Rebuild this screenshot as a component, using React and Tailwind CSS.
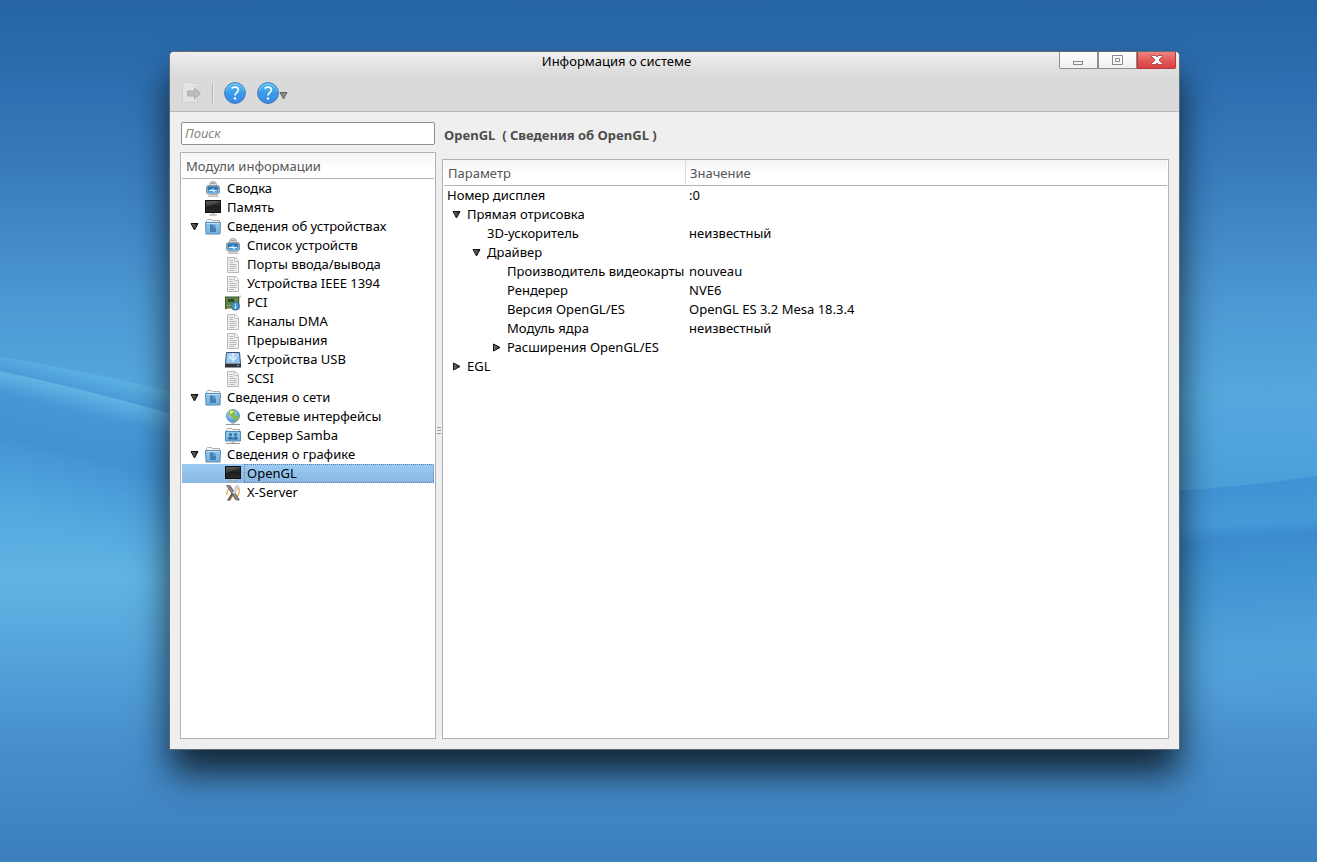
import React, { useState } from 'react';

const modules = [
  { label: 'Сводка', icon: 'computer', depth: 0 },
  { label: 'Память', icon: 'monitor', depth: 0 },
  { label: 'Сведения об устройствах', icon: 'folder', depth: 0, open: true },
  { label: 'Список устройств', icon: 'computer', depth: 1 },
  { label: 'Порты ввода/вывода', icon: 'document', depth: 1 },
  { label: 'Устройства IEEE 1394', icon: 'document', depth: 1 },
  { label: 'PCI', icon: 'pci', depth: 1 },
  { label: 'Каналы DMA', icon: 'document', depth: 1 },
  { label: 'Прерывания', icon: 'document', depth: 1 },
  { label: 'Устройства USB', icon: 'usb', depth: 1 },
  { label: 'SCSI', icon: 'document', depth: 1 },
  { label: 'Сведения о сети', icon: 'folder', depth: 0, open: true },
  { label: 'Сетевые интерфейсы', icon: 'globe', depth: 1 },
  { label: 'Сервер Samba', icon: 'samba', depth: 1 },
  { label: 'Сведения о графике', icon: 'folder', depth: 0, open: true },
  { label: 'OpenGL', icon: 'monitor', depth: 1 },
  { label: 'X-Server', icon: 'xserver', depth: 1 },
];

const params = [
  { name: 'Номер дисплея', value: ':0', pad: 'pl-[3px]' },
  { name: 'Прямая отрисовка', value: '', pad: 'pl-2', arrow: 'down' },
  { name: '3D-ускоритель', value: 'неизвестный', pad: 'pl-[43px]' },
  { name: 'Драйвер', value: '', pad: 'pl-7', arrow: 'down' },
  { name: 'Производитель видеокарты', value: 'nouveau', pad: 'pl-[63px]' },
  { name: 'Рендерер', value: 'NVE6', pad: 'pl-[63px]' },
  { name: 'Версия OpenGL/ES', value: 'OpenGL ES 3.2 Mesa 18.3.4', pad: 'pl-[63px]' },
  { name: 'Модуль ядра', value: 'неизвестный', pad: 'pl-[63px]' },
  { name: 'Расширения OpenGL/ES', value: '', pad: 'pl-12', arrow: 'right' },
  { name: 'EGL', value: '', pad: 'pl-2', arrow: 'right' },
];

const Gradients = () => (
  <svg className="absolute size-0" aria-hidden="true">
    <defs>
      <linearGradient id="help" x1="0" y1="0" x2="0" y2="1">
        <stop offset="0" stopColor="#5cc0f2" />
        <stop offset="0.5" stopColor="#3a9ce9" />
        <stop offset="1" stopColor="#3b86e6" />
      </linearGradient>
      <linearGradient id="screen" x1="0" y1="0" x2="0" y2="1">
        <stop offset="0" stopColor="#444" />
        <stop offset="0.5" stopColor="#1c1c1c" />
        <stop offset="1" stopColor="#2a2a2a" />
      </linearGradient>
      <linearGradient id="folder" x1="0" y1="0" x2="0" y2="1">
        <stop offset="0" stopColor="#93c6eb" />
        <stop offset="1" stopColor="#74b0de" />
      </linearGradient>
      <linearGradient id="blue" x1="0" y1="0" x2="0" y2="1">
        <stop offset="0" stopColor="#1a64a8" />
        <stop offset="1" stopColor="#4fb0f2" />
      </linearGradient>
      <radialGradient id="ocean" cx="0.4" cy="0.3" r="0.7">
        <stop offset="0" stopColor="#c4e4f8" />
        <stop offset="1" stopColor="#3f8fd0" />
      </radialGradient>
      <linearGradient id="arrow" x1="0" y1="0" x2="1" y2="0">
        <stop offset="0" stopColor="#777" />
        <stop offset="1" stopColor="#222" />
      </linearGradient>
    </defs>
  </svg>
);

const icons = {
  computer: (
    <>
      <path d="M4.5 4.5V3.5q0-3 3.5-3t3.5 3v1z" fill="#dedede" stroke="#a2a2a2" />
      <path d="M6 2.5h4" stroke="#8e8e8e" strokeWidth="0.8" />
      <path d="M5 13h6l2 2.5H3z" fill="#d8d8d8" stroke="#a8a8a8" strokeWidth="0.6" />
      <rect x="1.5" y="4.5" width="13" height="8.5" rx="2" fill="#b9c3cb" stroke="#8d969d" />
      <rect x="2.5" y="5.5" width="11" height="6.5" rx="1" fill="url(#blue)" />
      <path d="M4 9.5h8M6 9.5L7.5 8H9M7.5 9.5L9 11h1" stroke="#f0f9ff" fill="none" strokeWidth="0.9" />
    </>
  ),
  monitor: (
    <>
      <rect x="0.5" y="0.5" width="15" height="12" fill="url(#screen)" stroke="#111" />
      <path d="M1 1h14L1 7.5z" fill="#fff" opacity="0.12" />
      <path d="M6.5 13h3l0.5 1.500H6z" fill="#ccc" />
      <path d="M4 14.5h8v1H4z" fill="#9a9a9a" />
    </>
  ),
  folder: (
    <>
      <path d="M1.5 4V1.5l1-1h4l1 1h7V4" fill="#f3f3f3" stroke="#adadad" />
      <path d="M0.5 3.5h15L15 15H1z" fill="url(#folder)" stroke="#588db8" />
      <path d="M1.5 4.5h13" stroke="#bcdff6" />
      <path d="M5 5.5h3.5v3H11V13H5zM9 5.5l2 2H9z" fill="#4580b0" />
    </>
  ),
  document: (
    <>
      <path d="M2.5 0.5h8l3 3.500v11.500h-11z" fill="#efefef" stroke="#b8b8b8" />
      <path d="M9.5 0.5v4h4" fill="#fafafa" stroke="#c0c0c0" />
      <path d="M4.5 3.5H8M4.5 5.5H8M4.5 7.5h7M4.5 9.5h7M4.5 11.5h7M4.5 13.5h5" stroke="#bababa" />
    </>
  ),
  pci: (
    <>
      <path d="M14 14V2l2-1" fill="none" stroke="#bbb" strokeWidth="1.5" />
      <rect x="0.5" y="2" width="13" height="11.5" fill="#5b8541" stroke="#3c5c2f" />
      <rect x="3" y="4" width="6" height="3" fill="#33472b" />
      <path d="M2 13.5h6" stroke="#c9b458" />
      <path d="M2 10.5h4M10.5 4.5h2" stroke="#88ad67" />
      <circle cx="10.5" cy="11.2" r="4" fill="#4a91cc" stroke="#34729f" />
      <path d="M10.5 10.700v3M10.500 8.500v1.200" stroke="#e6f3ff" strokeWidth="1.3" />
    </>
  ),
  usb: (
    <>
      <path d="M1.5 0.5h13l1 11h-15z" fill="#8dc4f5" stroke="#41546a" />
      <path d="M2.5 1.5h11L14 5.500 2 9z" fill="#b8dcf9" opacity="0.6" />
      <path d="M0 11h16v4.500H0z" fill="#303338" />
      <path d="M0.5 11.5h15" stroke="#8b8f94" />
      <path d="M12 13.5h2" stroke="#6ec1ff" />
      <path d="M8 2v8M8 7.500L5.500 6V4M8 8.500L10.500 7V5" stroke="#fff" fill="none" strokeWidth="0.9" />
      <path d="M8 1l1.500 2h-3z" fill="#fff" />
    </>
  ),
  globe: (
    <>
      <circle cx="8" cy="7" r="6.5" fill="url(#ocean)" stroke="#6da3cb" />
      <path d="M4 2c2-1.500 5-1.500 6 0L9.500 4l1 1.500-1.500 1L10 8 8.500 9 6 7 4 5.500zM9.500 8l2.500-1.500 2 1.500-1 2.500-2.500 2-1-2z" fill="#8cba2d" />
      <path d="M4.500 2.500C6 1.200 7.500 1.200 9 2L6 5.500z" fill="#e2ef92" />
      <path d="M6.500 13.500h3V15h-3z" fill="#bbb" />
      <path d="M1 15.500h14" stroke="#999" />
    </>
  ),
  samba: (
    <>
      <path d="M1.5 3V1.5l1-1h4l1 1h7V4" fill="#f3f3f3" stroke="#a9a9a9" />
      <path d="M0.5 3.5h15v9.500H0.500z" fill="url(#folder)" stroke="#4f8abb" />
      <circle cx="5.5" cy="6.5" r="1.5" fill="#2f6da2" />
      <circle cx="10.5" cy="6.5" r="1.5" fill="#2f6da2" />
      <path d="M3 11.500c0-4 5-4 5 0 0-4 5-4 5 0z" fill="#2f6da2" />
      <path d="M6.500 13h3v2h-3z" fill="#bbb" />
      <path d="M1 15.500h14" stroke="#999" />
    </>
  ),
  xserver: (
    <>
      <path d="M2 10C1 7 3 4 7 3M10 2.500c4-1 5 2 4 5.500-1 3-3 5-5 5.500" fill="none" stroke="#f0a544" strokeWidth="1.3" />
      <path d="M1.500 0.500H5L14.500 15H11z" fill="#777" stroke="#4a4a4a" strokeWidth="0.6" />
      <path d="M3 1l9.500 13.500" stroke="#a5a5a5" />
      <path d="M12 0.500l2 1L9.500 9 7.500 8z" fill="#e4e4e4" stroke="#999" strokeWidth="0.6" />
      <path d="M6.500 8.500l2 1.500L5 15.500H2z" fill="#4b3c2b" />
      <path d="M4 14.500L7.500 10" stroke="#c78c3c" />
    </>
  ),
};

const Icon = ({ name }) => (
  <svg viewBox="0 0 16 16" className="size-4 shrink-0" aria-hidden="true">{icons[name]}</svg>
);

const Expander = ({ direction }) => (
  <svg viewBox="0 0 9 9" className="size-[9px] shrink-0" aria-hidden="true">
    <path d={direction === 'down' ? 'M1 1.5h7L4.5 8z' : 'M1.5 1v7L8 4.5z'} fill="url(#arrow)" stroke="#111" />
  </svg>
);

const HelpIcon = () => (
  <svg viewBox="0 0 22 22" className="size-[22px]" aria-hidden="true">
    <circle cx="11" cy="11" r="10.4" fill="url(#help)" stroke="#3a78b8" />
    <path d="M2 9a9.2 9.2 0 0 1 18 0" fill="none" stroke="#a6def8" opacity="0.5" />
    <path d="M7.5 6.500C10.500 4.200 14.500 5 14.400 8C14.300 10.500 11 10.800 11 13.500" fill="none" stroke="#fff" strokeWidth="1.6" />
    <circle cx="11" cy="16.500" r="1.2" fill="#fff" />
  </svg>
);

const Wallpaper = () => (
  <svg className="absolute inset-0 size-full" viewBox="0 0 1317 862" preserveAspectRatio="none" aria-hidden="true">
    <defs>
      <linearGradient id="sky" x1="0" y1="0" x2="0" y2="1">
        <stop offset="0" stopColor="#2565a6" />
        <stop offset="0.1" stopColor="#2d6fb0" />
        <stop offset="0.2" stopColor="#387cbc" />
        <stop offset="0.35" stopColor="#4c98d2" />
        <stop offset="0.46" stopColor="#55a8de" />
        <stop offset="0.56" stopColor="#4ca0da" />
        <stop offset="0.67" stopColor="#60b4e3" />
        <stop offset="0.78" stopColor="#529fd8" />
        <stop offset="0.87" stopColor="#468ecb" />
        <stop offset="1" stopColor="#3b7fbd" />
      </linearGradient>
      <linearGradient id="ribbon" gradientUnits="userSpaceOnUse" x1="85" y1="373" x2="80" y2="394">
        <stop offset="0" stopColor="#5bb0e1" />
        <stop offset="1" stopColor="#4696d6" />
      </linearGradient>
      <linearGradient id="leftWave" gradientUnits="userSpaceOnUse" x1="85" y1="392" x2="45" y2="560">
        <stop offset="0" stopColor="#5fb3e2" />
        <stop offset="0.12" stopColor="#4797d6" />
        <stop offset="0.35" stopColor="#4292d3" />
        <stop offset="0.75" stopColor="#54aadf" stopOpacity="0.8" />
        <stop offset="1" stopColor="#60b4e3" stopOpacity="0" />
      </linearGradient>
      <linearGradient id="rightWave" gradientUnits="userSpaceOnUse" x1="1240" y1="484" x2="1255" y2="720">
        <stop offset="0" stopColor="#3f92d3" />
        <stop offset="0.12" stopColor="#4599d8" />
        <stop offset="0.17" stopColor="#4499d8" />
        <stop offset="0.23" stopColor="#3b8bcf" />
        <stop offset="0.35" stopColor="#4093d2" />
        <stop offset="0.7" stopColor="#50a1d9" />
        <stop offset="1" stopColor="#4f9cd6" stopOpacity="0" />
      </linearGradient>
    </defs>
    <rect width="1317" height="862" fill="url(#sky)" />
    <path d="M0 357Q90 372 200 398V422L0 371z" fill="url(#ribbon)" />
    <path d="M0 371Q90 390 200 422V600H0z" fill="url(#leftWave)" />
    <path d="M1150 492Q1230 489 1317 476V740H1150z" fill="url(#rightWave)" />
  </svg>
);

const TitleBar = () => (
  <header className="flex h-6 items-start pr-[3px]">
    <h1 className="flex-1 pl-1 text-center leading-[18px]">Информация о системе</h1>
    <div className="flex">
      <button aria-label="Свернуть" className="flex h-[17px] w-[39px] items-center justify-center rounded-bl-[2px] border border-t-0 border-[#8d8d8d] bg-linear-to-b from-white to-[#f0f0f0]">
        <svg viewBox="0 0 11 11" className="size-[11px]"><rect x="0.5" y="6.5" width="9" height="3" fill="none" stroke="#8a8a8a" /></svg>
      </button>
      <button aria-label="Развернуть" className="flex h-[17px] w-[39px] items-center justify-center border border-t-0 border-[#8d8d8d] bg-linear-to-b from-white to-[#f0f0f0]">
        <svg viewBox="0 0 11 11" className="size-[11px]"><path d="M0.5 0.5h10v9h-10zM3.5 3.5h4v3h-4z" fill="none" stroke="#8a8a8a" /></svg>
      </button>
      <button aria-label="Закрыть" className="flex h-[17px] w-[39px] items-center justify-center rounded-br-[2px] border border-t-0 border-[#b13a3c] bg-linear-to-b from-[#ee8482] via-[#e35a59] to-[#dc3f40]">
        <svg viewBox="0 0 12 10" className="h-[10px] w-3">
          <path d="M0.5 0.5H5L6 2l1-1.500h4.500v2H10L8 5l2 2.500h1.500v2H7L6 8 5 9.500H0.500v-2H2L4 5 2 2.500H0.500z" fill="#fff" stroke="#99393a" strokeWidth="0.8" />
        </svg>
      </button>
    </div>
  </header>
);

const Toolbar = () => (
  <div className="flex h-[34px] items-center pl-3">
    <button disabled aria-label="Экспорт">
      <svg viewBox="0 0 20 22" className="h-[22px] w-5">
        <path d="M0.5 0.5h11l4 4v16h-15z" fill="#e4e4e4" stroke="#d0d0d0" />
        <path d="M11.5 0.5v4h4" fill="#efefef" stroke="#d0d0d0" />
        <path d="M5.5 9h7V6l6 5.500-6 5.500v-3h-7z" fill="#bdbdbd" stroke="#b0b0b0" />
      </svg>
    </button>
    <span className="mx-[10px] h-5 w-0.5 border-l border-[#b5b5b5] bg-[#e9e9e9]" />
    <button aria-label="Справка"><HelpIcon /></button>
    <button aria-label="Меню справки" className="ml-[11px] flex items-center">
      <HelpIcon />
      <svg viewBox="0 0 9 9" className="mt-1 size-[9px]"><path d="M1 1.5h7L4.5 8z" fill="#8a8a8a" stroke="#666" /></svg>
    </button>
  </div>
);

const ModuleTree = ({ selected, onSelect }) => (
  <nav className="flex-1 border border-[#b0b0b0] bg-white px-px">
    <h2 className="h-[26px] border-b border-[#b4b4b4] bg-linear-to-b from-[#f4f4f4] to-white to-60% pl-1 leading-[27px] text-[#555]">Модули информации</h2>
    <ul>
      {modules.map((item) => {
        const isActive = item.label === selected;
        return (
          <li key={item.label}>
            <button
              onClick={() => onSelect(item.label)}
              className={`flex h-[19px] w-full items-center text-left ${item.depth ? 'pl-[43px]' : 'pl-2'} ${isActive ? 'bg-linear-to-b from-[#9bcbf5] to-[#8ab7e0]' : ''}`}
            >
              {!item.depth && <span className="w-[15px]">{item.open && <Expander direction="down" />}</span>}
              <Icon name={item.icon} />
              <span className={`ml-[3px] h-full flex-1 border border-dotted pl-0.5 leading-[17px] ${isActive ? 'border-[#5c7fa3]' : 'border-transparent'}`}>{item.label}</span>
            </button>
          </li>
        );
      })}
    </ul>
  </nav>
);

const ParamTable = () => (
  <div className="flex-1 border border-[#b0b0b0] bg-white px-px">
    <table className="w-full table-fixed border-separate border-spacing-0 text-left">
      <thead>
        <tr className="bg-linear-to-b from-[#f4f4f4] to-white to-60% text-[#555]">
          <th className="h-[26px] w-[242px] border-r border-b border-r-[#dcdcdc] border-b-[#b4b4b4] p-0 pt-0.5 pl-1 font-normal">Параметр</th>
          <th className="h-[26px] border-b border-[#b4b4b4] p-0 pt-0.5 pl-1 font-normal">Значение</th>
        </tr>
      </thead>
      <tbody>
        {params.map((row) => (
          <tr key={row.name} className="h-[19px]">
            <td className={`p-0 whitespace-nowrap ${row.pad}`}>
              <div className="flex items-center">
                {row.arrow && <span className="w-[15px]"><Expander direction={row.arrow} /></span>}
                {row.name}
              </div>
            </td>
            <td className="p-0 pl-[3px] whitespace-nowrap">{row.value}</td>
          </tr>
        ))}
      </tbody>
    </table>
  </div>
);

const App = () => {
  const [selected, setSelected] = useState('OpenGL');
  const [query, setQuery] = useState('');

  return (
    <div className="relative flex min-h-screen overflow-hidden pt-[52px] pr-[138px] pb-[113px] pl-[170px] font-['Noto_Sans',sans-serif] text-[13px] leading-[19px] text-black">
      <Gradients />
      <Wallpaper />
      <div className="relative flex flex-1 flex-col rounded-t-[4px] bg-[#efefef] shadow-[0_0_0_1px_#5f6b76,0_24px_36px_0_rgba(0,0,0,0.75)]">
        <div className="h-[60px] rounded-t-[4px] border-b border-[#b9b9b9] bg-linear-to-b from-[#efefef] to-[#dadada] to-40%">
          <TitleBar />
          <Toolbar />
        </div>

        <main className="flex flex-1 p-[10px]">
          {/* Module list */}
          <aside className="flex w-64 shrink-0 flex-col">
            <input
              type="text"
              aria-label="Поиск"
              placeholder="Поиск"
              value={query}
              onChange={(e) => setQuery(e.target.value)}
              className="mb-[7px] ml-px h-[23px] w-[254px] rounded-[2px] border border-[#8f8f8f] bg-white px-[3px] pb-0.5 placeholder:text-[#858585] placeholder:italic"
            />
            <ModuleTree selected={selected} onSelect={setSelected} />
          </aside>

          {/* Splitter */}
          <div className="flex w-1.5 shrink-0 flex-col items-center justify-center gap-0.5">
            <span className="h-px w-1 bg-[#999]" />
            <span className="h-px w-1 bg-[#999]" />
            <span className="h-px w-1 bg-[#999]" />
          </div>

          {/* Details */}
          <section className="flex flex-1 flex-col">
            <h2 className="h-[37px] pt-1 pl-0.5 font-bold whitespace-pre text-[#4c4c4c]">OpenGL  ( Сведения об OpenGL )</h2>
            <ParamTable />
          </section>
        </main>
      </div>
    </div>
  );
};

export default App;
